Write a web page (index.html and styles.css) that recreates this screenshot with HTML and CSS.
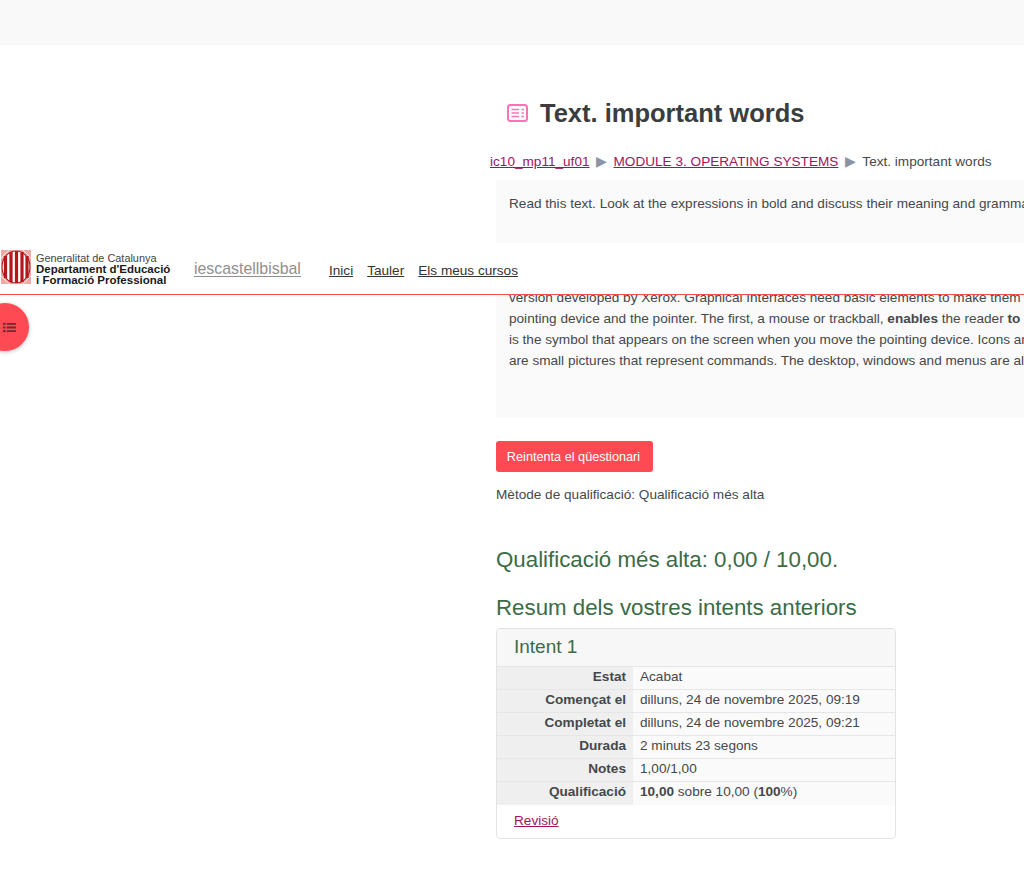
FILE: index.html
```html
<!DOCTYPE html>
<html lang="ca">
<head>
<meta charset="utf-8">
<title>Text. important words</title>
<link rel="stylesheet" href="styles.css">
</head>
<body>
<div class="topbar"></div>
<nav class="navbar">
  <a class="logo" href="#">
    <svg class="shield" viewBox="0 0 30 34" width="30" height="34">
      <rect width="30" height="34" fill="#eda9a4"/>
      <path d="M0 8L8 0M0 16L16 0M14 34L30 18M22 34L30 26M30 8L22 0M30 16L14 0M0 18L16 34M0 26L8 34" stroke="#fbe6e4" stroke-width="1"/>
      <ellipse cx="15" cy="17" rx="14.5" ry="16.5" fill="#fff"/>
      <ellipse cx="15" cy="17" rx="14" ry="16" fill="none" stroke="#b5161b" stroke-width="1.2"/>
      <path d="M4.5 6v22M10 2v30M15.5 1v32M21 2v30M26 6v22" stroke="#b5161b" stroke-width="3.2"/>
    </svg>
    <span class="logo-text">
      <span class="logo-name">Generalitat de Catalunya</span>
      <b>Departament d'Educació</b>
      <b>i Formació Professional</b>
    </span>
  </a>
  <a class="site" href="#">iescastellbisbal</a>
  <ul class="menu">
    <li><a href="#">Inici</a></li>
    <li><a href="#">Tauler</a></li>
    <li><a href="#">Els meus cursos</a></li>
  </ul>
</nav>
<button class="drawer" aria-label="Index">
  <svg viewBox="0 0 14 12" width="13" height="11"><path d="M0 .8h2.6v2.4H0zM0 4.8h2.6v2.4H0zM0 8.8h2.6v2.4H0zM4 1h10v2H4zM4 5h10v2H4zM4 9h10v2H4z" fill="#6e2a33"/></svg>
</button>
<main class="main">
  <header class="title">
    <svg class="quiz-icon" viewBox="0 0 24 24" width="24" height="24">
      <rect x="3" y="4" width="19" height="16" rx="2.5" fill="#fff" stroke="#ff72b8" stroke-width="2"/>
      <path d="M6.5 8.5h7.5M6.5 12h7.5M6.5 15.5h7.5M16.5 8.5h2.5M16.5 12h2.5M16.5 15.5h2.5" stroke="#ff72b8" stroke-width="1.6"/>
    </svg>
    <h1>Text. important words</h1>
  </header>
  <div class="crumbs">
    <a href="#">ic10_mp11_uf01</a><span class="sep">▶</span><a href="#">MODULE 3. OPERATING SYSTEMS</a><span class="sep">▶</span><span>Text. important words</span>
  </div>
  <section class="intro">
    <p>Read this text. Look at the expressions in bold and discuss their meaning and grammar with your partner before answering.</p>
    <p class="body-text">The first graphical user interface was designed by Xerox Corporation in the 1970s, but it was not until the<br>
    1980s that graphical interfaces became popular. Today, most computers use a graphical interface, like the<br>
    version developed by Xerox. Graphical Interfaces need basic elements to make them work. Two of these are the<br>
    pointing device and the pointer. The first, a mouse or trackball, <b>enables</b> the reader <b>to</b> select objects on screen. The pointer<br>
    is the symbol that appears on the screen when you move the pointing device. Icons and other elements also appear; icons<br>
    are small pictures that represent commands. The desktop, windows and menus are also common elements.</p>
  </section>
  <button class="retry">Reintenta el qüestionari</button>
  <p class="method">Mètode de qualificació: Qualificació més alta</p>
  <h3 class="best">Qualificació més alta: 0,00 / 10,00.</h3>
  <h3 class="summary">Resum dels vostres intents anteriors</h3>
  <article class="card">
    <h4>Intent 1</h4>
    <table>
      <tr><th>Estat</th><td>Acabat</td></tr>
      <tr><th>Començat el</th><td>dilluns, 24 de novembre 2025, 09:19</td></tr>
      <tr><th>Completat el</th><td>dilluns, 24 de novembre 2025, 09:21</td></tr>
      <tr><th>Durada</th><td>2 minuts 23 segons</td></tr>
      <tr><th>Notes</th><td>1,00/1,00</td></tr>
      <tr><th>Qualificació</th><td><b>10,00</b> sobre 10,00 (<b>100</b>%)</td></tr>
    </table>
    <div class="card-foot"><a href="#">Revisió</a></div>
  </article>
</main>
</body>
</html>
```
FILE: styles.css
```css
* { box-sizing: border-box; }
html, body { margin: 0; height: 883px; overflow: hidden; }
body { position: relative; background: #fff; color: #45484b; font: 13.6px/21px "Liberation Sans", Arial, sans-serif; }
a { color: #a3125f; }
.topbar { height: 45px; background: #f9f9f9; }
.navbar { position: absolute; top: 243px; left: 0; width: 1024px; height: 52px; background: #fff; border-bottom: 1px solid #ff4a53; display: flex; align-items: center; padding: 0 0 3px 1px; }
.logo { display: flex; align-items: center; gap: 5px; color: #222; text-decoration: none; width: 193px; }
.shield { display: block; }
.logo-text { display: flex; flex-direction: column; font-size: 11.5px; line-height: 11px; color: #1a1a1a; margin-top: 5px; white-space: nowrap; }
.logo-name { font-size: 10.9px; color: #444; }
.site { color: #8f8f8f; font-size: 15.9px; width: 135px; margin-top: 2px; text-decoration-thickness: 1px; text-underline-offset: 2px; }
.menu { list-style: none; margin: 6px 0 0; padding: 0; display: flex; gap: 14px; }
.menu a { color: #333; }
.drawer { position: absolute; left: -19px; top: 303px; width: 48px; height: 48px; border: 0; border-radius: 50%; background: #ff4a53; box-shadow: 0 1px 4px rgba(0,0,0,.25); display: flex; align-items: center; justify-content: center; padding: 0 0 0 9px; }
.main { width: 528px; margin-left: 496px; }
.title { display: flex; align-items: center; gap: 11px; margin: 0 0 0 9px; padding-top: 46px; height: 92px; }
.quiz-icon { flex: none; margin-top: -3px; }
h1 { margin: -2px 0 0; font-size: 25.5px; line-height: 32px; font-weight: 700; color: #3a3d40; white-space: nowrap; }
.crumbs { margin: 13px 0 0 -6px; height: 25px; padding-top: 1px; white-space: nowrap; }
.sep { color: #8a94a6; font-size: 14px; margin: 0 6.5px; }
.intro { width: 620px; background: #fafafa; height: 238px; padding: 13px 13px; white-space: nowrap; border-radius: 3px; margin-top: 5px; }
.intro p { margin: 0; }
.intro .body-text { padding-top: 31px; }
.retry { display: block; margin-top: 23px; height: 31px; width: 157px; padding: 0 2px 0 0; border: 0; border-radius: 3px; background: #ff4a53; color: #fff; font: 12.7px "Liberation Sans", Arial, sans-serif; }
.method { margin: 12px 0 0; }
h3 { margin: 0; font-weight: 400; color: #3b6b47; font-size: 22.3px; line-height: 28px; white-space: nowrap; }
.best { margin-top: 41px; }
.summary { margin-top: 20px; }
.card { width: 400px; height: 211px; margin-top: 6px; border: 1px solid #e3e3e3; border-radius: 4px; overflow: hidden; }
.card h4 { margin: 0; height: 37px; padding: 6px 17px 0; background: #f7f7f7; font-size: 19px; line-height: 24px; font-weight: 400; color: #3b6b47; }
table { width: 100%; border-collapse: collapse; }
tr { height: 23px; border-top: 1px solid #e6e6e6; }
th { width: 136px; padding: 0 7px 2px 0; background: #efefef; text-align: right; font-weight: 700; line-height: 20px; }
td { padding: 0 0 2px 7px; background: #fafafa; line-height: 20px; }
.card-foot { padding: 5px 17px; }
```
